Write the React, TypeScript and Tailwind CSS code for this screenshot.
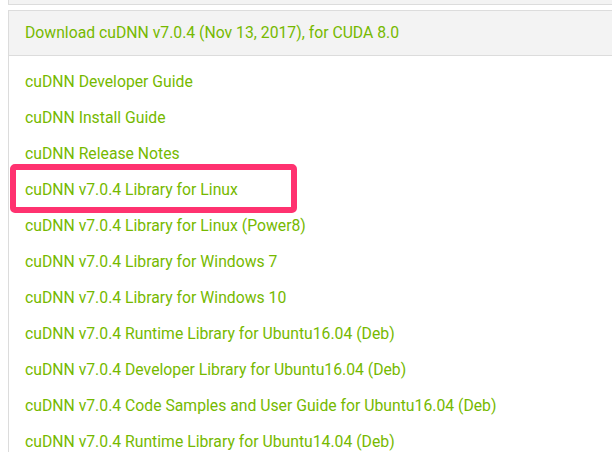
import React from "react";

const links = [
  "cuDNN Developer Guide",
  "cuDNN Install Guide",
  "cuDNN Release Notes",
  "cuDNN v7.0.4 Library for Linux",
  "cuDNN v7.0.4 Library for Linux (Power8)",
  "cuDNN v7.0.4 Library for Windows 7",
  "cuDNN v7.0.4 Library for Windows 10",
  "cuDNN v7.0.4 Runtime Library for Ubuntu16.04 (Deb)",
  "cuDNN v7.0.4 Developer Library for Ubuntu16.04 (Deb)",
  "cuDNN v7.0.4 Code Samples and User Guide for Ubuntu16.04 (Deb)",
  "cuDNN v7.0.4 Runtime Library for Ubuntu14.04 (Deb)",
];

export default function App() {
  return (
    <div className="relative h-[452px] w-[612px] overflow-hidden bg-white pl-2 font-['Roboto',sans-serif] text-[15.75px] text-[#76b900]">
      <div className="h-[5px] border-b border-l border-[#dcdcdc] bg-[#f3f3f3]" />
      <div className="mt-[5px] flex h-[46px] items-center border-y border-l border-[#dcdcdc] bg-[#f3f3f3] pb-[1px] pl-[16px]">
        <a href="#">Download cuDNN v7.0.4 (Nov 13, 2017), for CUDA 8.0</a>
      </div>
      <ul className="border-l border-[#dcdcdc] pt-[8px] pl-[16px]">
        {links.map((l) => (
          <li key={l} className="leading-[36px]">
            <a href="#">{l}</a>
          </li>
        ))}
      </ul>

      {/* highlight annotation */}
      <div className="absolute left-[10px] top-[164px] h-[49px] w-[287px] rounded-[5px] border-[6px] border-[#ff3270]" />
    </div>
  );
}
